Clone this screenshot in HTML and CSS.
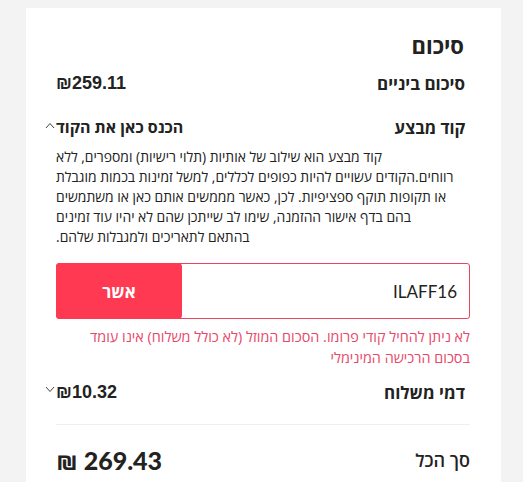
FILE: index.html
```html
<!DOCTYPE html>
<html lang="he">
<head>
<meta charset="utf-8">
<link rel="stylesheet" href="styles.css">
</head>
<body>
<div class="card" dir="rtl">
  <h2 class="title">סיכום</h2>
  <div class="row subtotal">
    <span class="label">סיכום ביניים</span>
    <span class="amount" dir="ltr">₪259.11</span>
  </div>
  <div class="row promo">
    <span class="label">קוד מבצע</span>
    <span class="promo-link">הכנס כאן את הקוד<svg class="chev" width="10" height="7" viewBox="0 0 10 7"><path d="M1 6 L5 1.5 L9 6" fill="none" stroke="#444" stroke-width="1"/></svg></span>
  </div>
  <p class="desc">קוד מבצע הוא שילוב של אותיות (תלוי רישיות) ומספרים, ללא<br>רווחים.הקודים עשויים להיות כפופים לכללים, למשל זמינות בכמות מוגבלת<br>או תקופות תוקף ספציפיות. לכן, כאשר מממשים אותם כאן או משתמשים<br>בהם בדף אישור ההזמנה, שימו לב שייתכן שהם לא יהיו עוד זמינים<br>בהתאם לתאריכים ולמגבלות שלהם.</p>
  <div class="code-box">
    <span class="code-input"><span dir="ltr">ILAFF16</span></span>
    <button class="apply">אשר</button>
  </div>
  <p class="error">לא ניתן להחיל קודי פרומו. הסכום המוזל (לא כולל משלוח) אינו עומד<br>בסכום הרכישה המינימלי</p>
  <div class="row shipping">
    <span class="label">דמי משלוח</span>
    <span class="amount ship-amount" dir="ltr"><svg class="chev down" width="10" height="7" viewBox="0 0 10 7"><path d="M1 1 L5 5.5 L9 1" fill="none" stroke="#444" stroke-width="1"/></svg>₪10.32</span>
  </div>
  <div class="divider"></div>
  <div class="row total">
    <span class="total-label">סך הכל</span>
    <span class="total-amount">269.43 ₪</span>
  </div>
</div>
</body>
</html>
```
FILE: styles.css
```css
html, body {
  margin: 0;
  padding: 0;
  background: #f3f3f3;
}
body {
  padding: 8px 22px 0 26px;
  font-family: Lato, "Open Sans", sans-serif;
  color: #222;
}
.card {
  background: #fff;
  box-sizing: border-box;
  padding: 23px 31px 40px 30px;
  min-height: 500px;
}
.title {
  margin: 0 6px 12px 0;
  font-family: "Open Sans", sans-serif;
  font-size: 22px;
  line-height: 28px;
  font-weight: bold;
  color: #222;
}
.row {
  display: flex;
  justify-content: space-between;
  align-items: center;
  height: 24px;
}
.label {
  font-family: "Open Sans", sans-serif;
  font-weight: bold;
  font-size: 17px;
  color: #222;
  margin-right: 5px;
}
.amount {
  font-family: "Liberation Sans", sans-serif;
  font-weight: bold;
  font-size: 18px;
  color: #222;
}
.subtotal { margin-bottom: 20px; }
.promo .label { font-size: 16.5px; }
.promo-link {
  font-family: "Open Sans", sans-serif;
  font-weight: bold;
  font-size: 16px;
  color: #222;
  display: inline-flex;
  align-items: flex-start;
}
.chev {
  margin-left: -11px;
  margin-right: 1px;
  margin-top: 6px;
}
.ship-amount {
  display: inline-flex;
  align-items: flex-start;
}
.chev.down {
  margin-left: -11px;
  margin-right: 1px;
  margin-top: 4px;
}
.desc {
  margin: 8px 0 16px 0;
  font-family: "Open Sans", sans-serif;
  font-size: 13.9px;
  line-height: 20px;
  text-align: left;
  white-space: nowrap;
  color: #222;
}
.code-box {
  display: flex;
  align-items: stretch;
  height: 56px;
  box-sizing: border-box;
  border: 1px solid #e8455e;
  border-radius: 3px;
}
.code-input {
  flex: 1;
  display: flex;
  align-items: center;
  justify-content: flex-start;
  padding-right: 12px;
  font-family: Lato, sans-serif;
  font-size: 17px;
  color: #222;
}
.apply {
  width: 126px;
  margin: -1px;
  border: none;
  border-radius: 4px;
  background: #ff3951;
  color: #fff;
  font-family: "Open Sans", sans-serif;
  font-weight: bold;
  font-size: 17px;
}
.error {
  margin: 7px 0 12px 0;
  font-family: "Open Sans", sans-serif;
  font-size: 14.4px;
  line-height: 21px;
  white-space: nowrap;
  color: #e8476a;
}
.divider {
  height: 1px;
  background: #eee;
  margin: 20px 0 20px 0;
}
.total { height: 30px; }
.total-label {
  font-family: "Open Sans", sans-serif;
  font-weight: 600;
  font-size: 18px;
  color: #222;
}
.total-amount {
  font-family: Lato, "Open Sans", sans-serif;
  font-weight: 900;
  font-size: 25px;
  color: #222;
}
```
